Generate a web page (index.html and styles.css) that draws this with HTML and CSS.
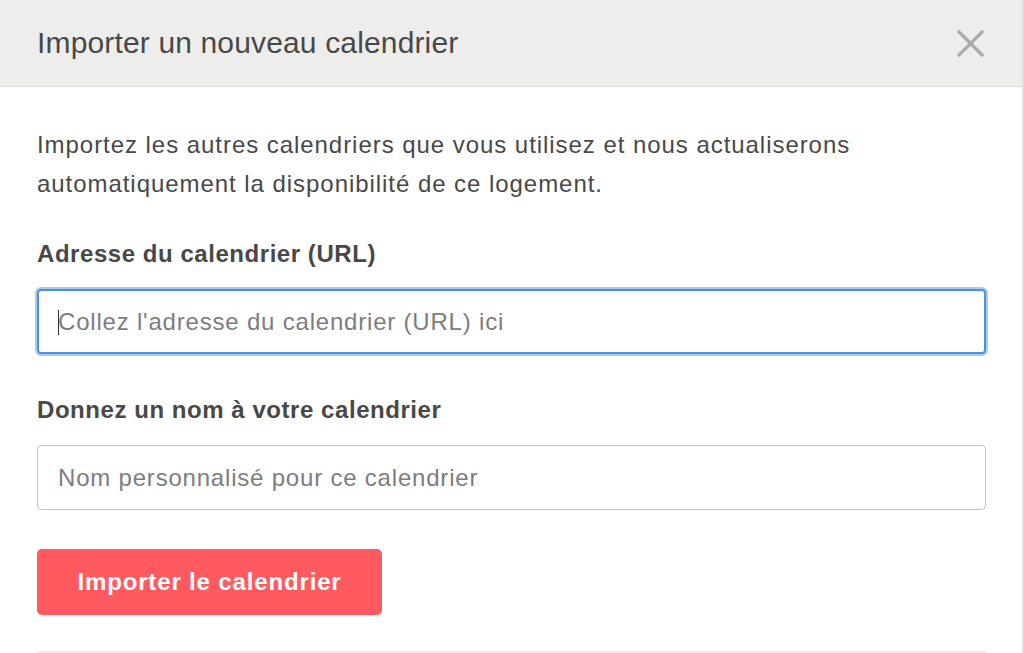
FILE: index.html
```html
<!DOCTYPE html>
<html lang="fr">
<head>
    <meta charset="UTF-8">
    <meta name="viewport" content="width=device-width, initial-scale=1.0">
    <title>Importer un nouveau calendrier</title>
    <link rel="stylesheet" href="styles.css">
</head>
<body>
    <div class="modal">
        <div class="modal-header">
            <h1>Importer un nouveau calendrier</h1>
            <button class="close-btn" aria-label="Fermer">
                <svg width="27" height="27" viewBox="0 0 27 27">
                    <path d="M2 2 L25 25 M25 2 L2 25" stroke="#ababab" stroke-width="3.2" stroke-linecap="square"/>
                </svg>
            </button>
        </div>

        <div class="modal-body">
            <p class="intro">Importez les autres calendriers que vous utilisez et nous actualiserons automatiquement la disponibilité de ce logement.</p>

            <label class="field-label" for="calUrl">Adresse du calendrier (URL)</label>
            <div class="field focused">
                <span class="caret"></span>
                <input type="text" id="calUrl" placeholder="Collez l'adresse du calendrier (URL) ici">
            </div>

            <label class="field-label" for="calName">Donnez un nom à votre calendrier</label>
            <div class="field">
                <input type="text" id="calName" placeholder="Nom personnalisé pour ce calendrier">
            </div>

            <button class="import-btn">Importer le calendrier</button>

            <hr class="divider">
        </div>
    </div>
</body>
</html>
```

FILE: styles.css
```css
body {
    margin: 0;
    font-family: "Liberation Sans", Arial, sans-serif;
    color: #484848;
    background: #fff;
}

.modal {
    width: 1022px;
    height: 653px;
    border-right: 2px solid #dedede;
    overflow: hidden;
}

.modal-header {
    height: 86px;
    background: #edeeec;
    border-bottom: 1px solid #dcdddb;
    display: flex;
    align-items: center;
    justify-content: space-between;
    padding: 0 38px 0 37px;
}

.modal-header h1 {
    margin: 0;
    font-size: 30px;
    font-weight: normal;
    letter-spacing: 0.15px;
    color: #484848;
}

.close-btn {
    border: none;
    background: none;
    padding: 0;
    width: 27px;
    height: 27px;
    margin-top: 1px;
    cursor: pointer;
}

.modal-body {
    padding: 38px 36px 0 37px;
}

.intro {
    margin: 0;
    font-size: 24px;
    line-height: 39px;
    letter-spacing: 0.95px;
    padding-right: 100px;
}

.field-label {
    display: block;
    margin-top: 36px;
    font-size: 24px;
    line-height: 30px;
    font-weight: bold;
    letter-spacing: 0.55px;
}

.field {
    position: relative;
    margin-top: 20px;
    height: 65px;
    border: 1px solid #c4c4c4;
    border-radius: 4px;
    box-sizing: border-box;
}

.field + .field-label {
    margin-top: 41px;
}

.field.focused {
    border: 2px solid #4a8fe0;
    box-shadow: 0 0 0 2px #a9cbf2;
}

.field input {
    width: 100%;
    height: 100%;
    box-sizing: border-box;
    border: none;
    outline: none;
    background: transparent;
    padding: 0 20px;
    font-family: inherit;
    font-size: 24px;
    letter-spacing: 0.8px;
    color: #484848;
}

.field.focused input {
    padding: 0 19px;
}

.field input::placeholder {
    color: #7d7d7d;
}

.caret {
    position: absolute;
    left: 19px;
    top: 19px;
    width: 1px;
    height: 25px;
    background: #333;
}

.import-btn {
    display: block;
    margin-top: 39px;
    width: 345px;
    height: 66px;
    border: none;
    border-radius: 5px;
    background: #ff5a5f;
    color: #fff;
    font-family: inherit;
    font-size: 24px;
    font-weight: bold;
    letter-spacing: 0.85px;
    cursor: pointer;
}

.divider {
    margin: 36px 0 0;
    border: none;
    border-top: 2px solid #ececec;
}
```
